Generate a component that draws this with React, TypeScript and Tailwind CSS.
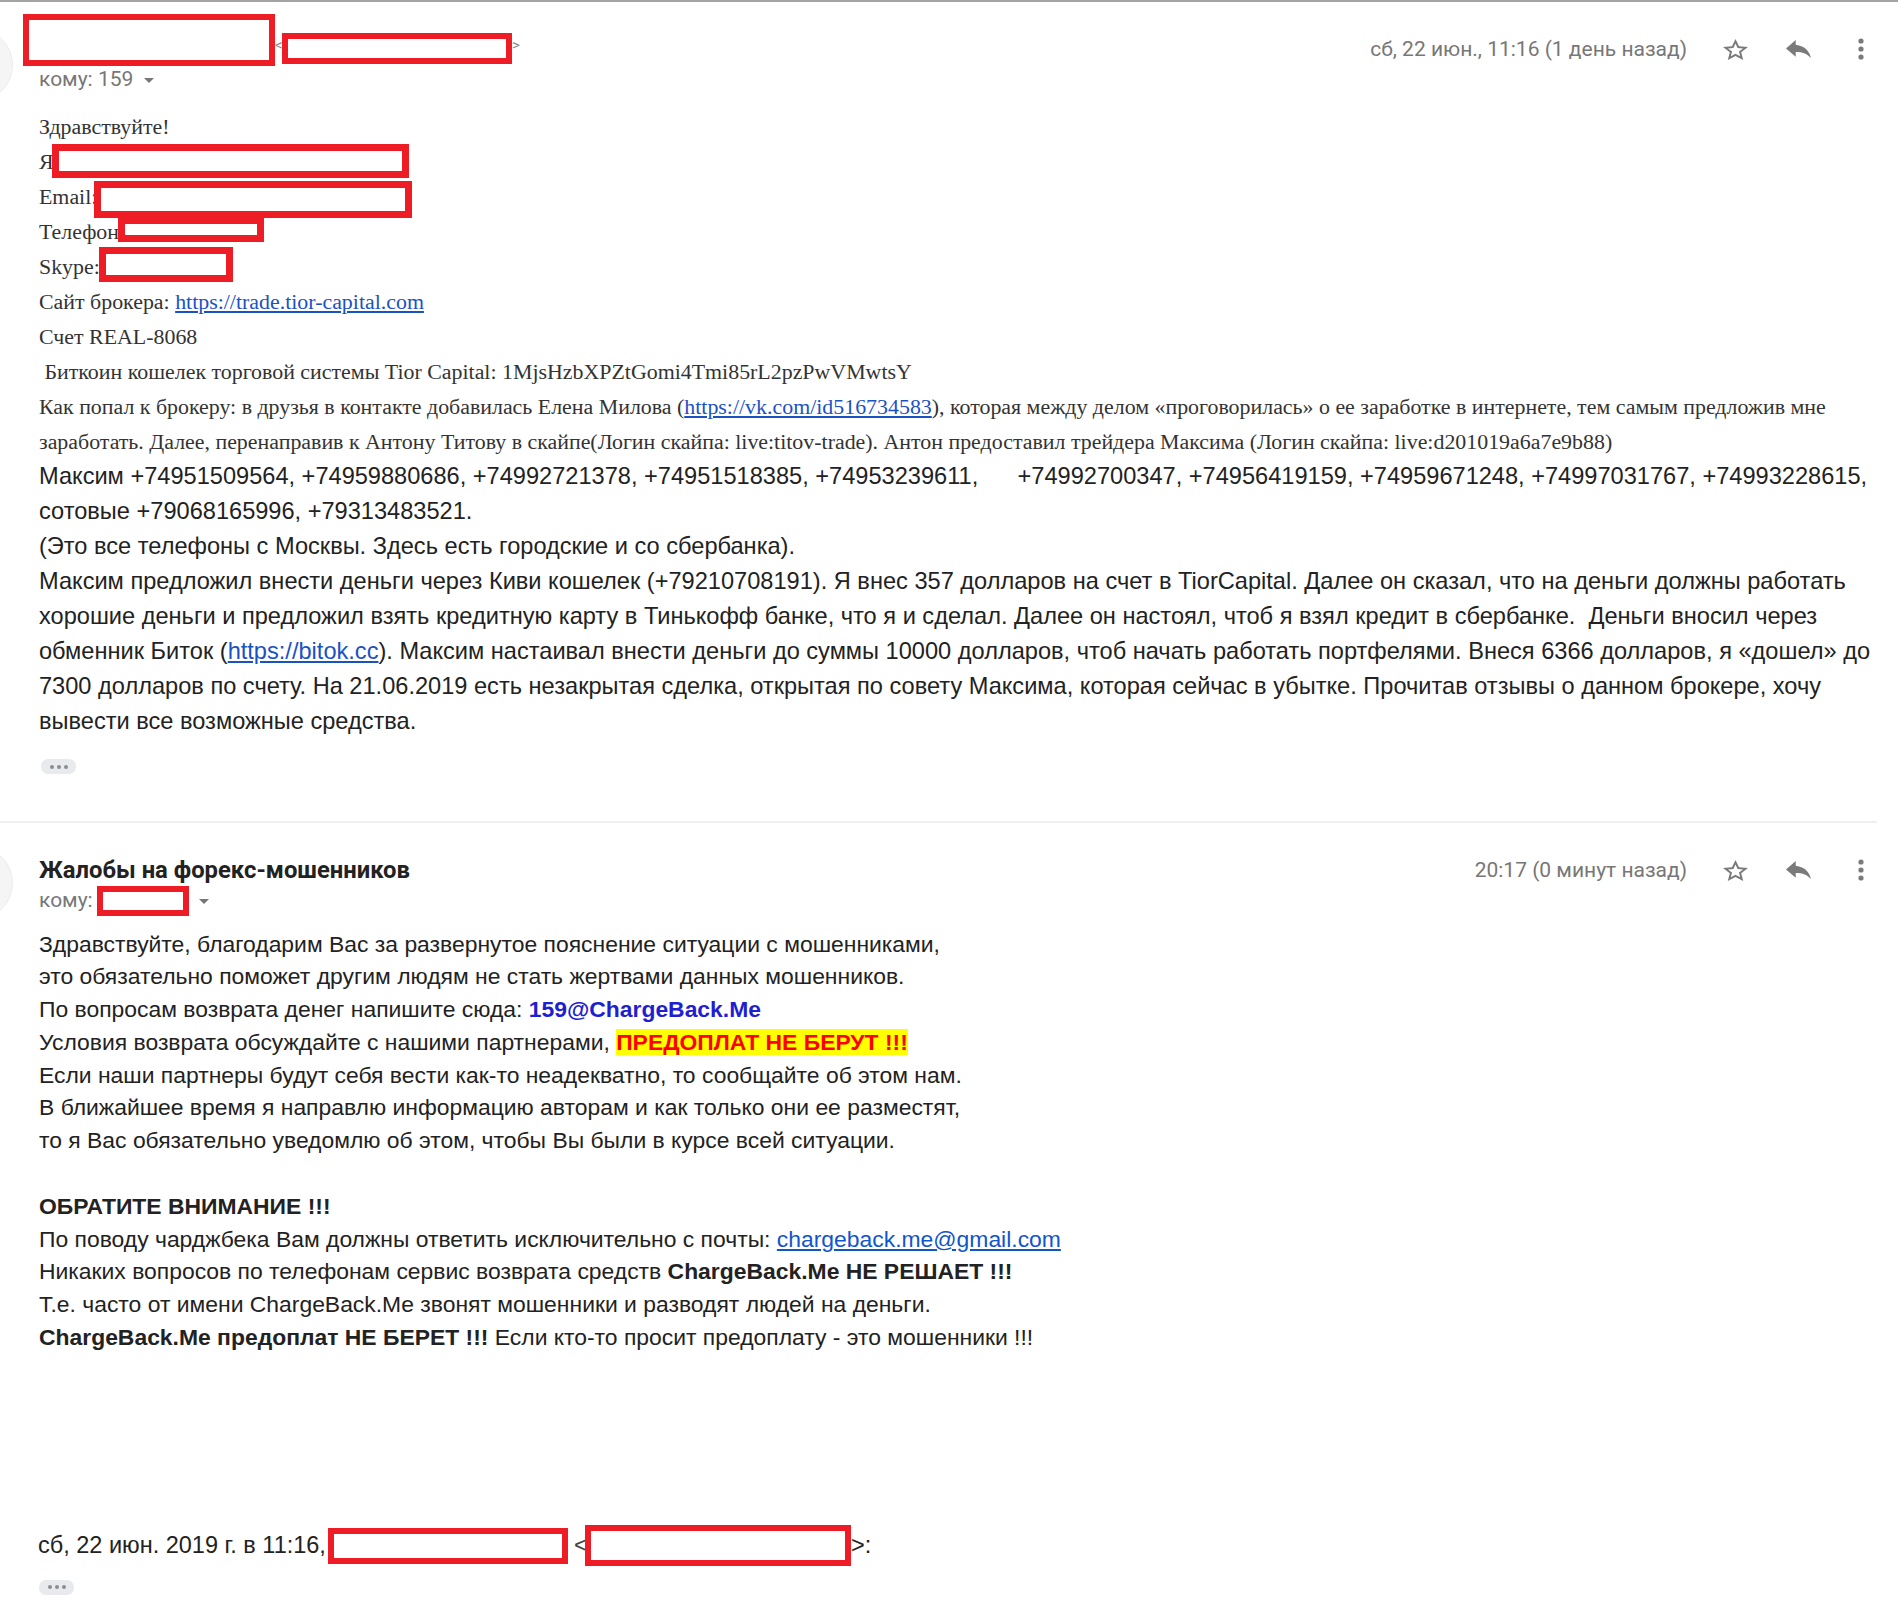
import React from "react";

function RedBox({ className }: { className: string }) {
  return <div className={"shrink-0 bg-white border-[#ee1c25] " + className} />;
}

function Caret() {
  return (
    <span className="inline-block w-0 h-0 border-l-[5px] border-r-[5px] border-t-[5px] border-l-transparent border-r-transparent border-t-[#777]" />
  );
}

function StarIcon() {
  return (
    <svg width="25" height="21" viewBox="2 2 20 19" preserveAspectRatio="none" fill="#7a7a7a">
      <path d="M22 9.24l-7.19-.62L12 2 9.19 8.63 2 9.24l5.46 4.73L5.82 21 12 17.27 18.18 21l-1.63-7.03L22 9.24zM12 15.4l-3.76 2.27 1-4.28-3.32-2.88 4.38-.38L12 6.1l1.71 4.04 4.38.38-3.32 2.88 1 4.28L12 15.4z" />
    </svg>
  );
}

function ReplyIcon() {
  return (
    <svg width="25" height="18" viewBox="3 5 18 15" preserveAspectRatio="none" fill="#7a7a7a">
      <path d="M10 9V5l-7 7 7 7v-4.1c5 0 8.5 1.6 11 5.1-1-5-4-10-11-11z" />
    </svg>
  );
}

function MoreIcon() {
  return (
    <svg width="6" height="22" viewBox="0 0 6 22" fill="#7a7a7a">
      <circle cx="3" cy="3" r="2.6" />
      <circle cx="3" cy="11" r="2.6" />
      <circle cx="3" cy="19" r="2.6" />
    </svg>
  );
}

function Actions({ time }: { time: string }) {
  return (
    <div className="flex items-center h-[24px]">
      <span className="font-['Roboto',sans-serif] text-[21px] text-[#777] leading-[24px] whitespace-nowrap">{time}</span>
      <span className="ml-[36px] flex"><StarIcon /></span>
      <span className="ml-[38px] flex"><ReplyIcon /></span>
      <span className="ml-[47px] flex"><MoreIcon /></span>
    </div>
  );
}

function DotsButton() {
  return (
    <div className="w-[35px] h-[15px] rounded-[7px] bg-[#e8eaed] flex items-center justify-center gap-[3px]">
      <span className="w-[4px] h-[4px] rounded-full bg-[#8a8d91]" />
      <span className="w-[4px] h-[4px] rounded-full bg-[#8a8d91]" />
      <span className="w-[4px] h-[4px] rounded-full bg-[#8a8d91]" />
    </div>
  );
}

const SL = "h-[35px] leading-[35px] whitespace-pre";
const AL = "h-[35px] leading-[35px] whitespace-pre";
const BL = "h-[32.8px] leading-[32.8px] whitespace-pre";
const LINK = "text-[#1a52c4] underline";

export default function App() {
  return (
    <div className="min-h-[1624px] bg-white border-t-2 border-[#a3a3a3] overflow-hidden">
      {/* Message 1 */}
      <div className="relative pl-[39px]">
        <div className="absolute left-[-61px] top-[26px] w-[74px] h-[74px] rounded-full bg-[#f5f5f5] border border-[#ececec]" />
        <div className="flex items-start justify-between pr-[34px] pt-[12px]">
          <div className="flex items-start">
            <RedBox className="-ml-[16px] w-[252px] h-[52px] border-[6px]" />
            <span className="inline-block w-[7px] mt-[24px] text-[15px] leading-[15px] text-[#888] font-['Roboto',sans-serif]">&lt;</span>
            <RedBox className="mt-[19px] w-[230px] h-[31px] border-[6px]" />
            <span className="inline-block mt-[24px] text-[15px] leading-[15px] text-[#888] font-['Roboto',sans-serif]">&gt;</span>
          </div>
          <div className="mt-[23px]">
            <Actions time="сб, 22 июн., 11:16 (1 день назад)" />
          </div>
        </div>
        <div className="flex items-center h-[28px] font-['Roboto',sans-serif] text-[21px] text-[#777]">
          <span>кому: 159</span>
          <span className="ml-[11px] flex"><Caret /></span>
        </div>

        <div className="mt-[14.5px] font-['Liberation_Serif',serif] text-[21.9px] text-[#333]">
          <div className={SL}>Здравствуйте!</div>
          <div className="flex items-center h-[35px]">
            <span className="leading-[35px]">Я</span>
            <RedBox className="-ml-[2px] w-[357px] h-[34px] border-[7px]" />
          </div>
          <div className="flex items-center h-[35px]">
            <span className="leading-[35px]">Email:</span>
            <RedBox className="-ml-[3px] mt-[7px] w-[318px] h-[37px] border-[7px]" />
          </div>
          <div className="flex items-center h-[35px]">
            <span className="leading-[35px]">Телефон</span>
            <RedBox className="-ml-[1px] mb-[3px] w-[146px] h-[25px] border-[7px]" />
          </div>
          <div className="flex items-center h-[35px]">
            <span className="leading-[35px]">Skype:</span>
            <RedBox className="-ml-[1px] mb-[3px] w-[134px] h-[35px] border-[7px]" />
          </div>
          <div className={SL}>
            Сайт брокера: <span className={LINK}>https://trade.tior-capital.com</span>
          </div>
          <div className={SL}>Счет REAL-8068</div>
          <div className={SL}> Биткоин кошелек торговой системы Tior Capital: 1MjsHzbXPZtGomi4Tmi85rL2pzPwVMwtsY</div>
          <div className={SL}>
            Как попал к брокеру: в друзья в контакте добавилась Елена Милова (<span className={LINK}>https://vk.com/id516734583</span>), которая между делом «проговорилась» о ее заработке в интернете, тем самым предложив мне
          </div>
          <div className={SL}>
            заработать. Далее, перенаправив к Антону Титову в скайпе(Логин скайпа: live:titov-trade). Антон предоставил трейдера Максима (Логин скайпа: live:d201019a6a7e9b88)
          </div>
        </div>

        <div className="font-['Liberation_Sans',Arial,sans-serif] text-[23.6px] text-[#222]">
          <div className={AL}>Максим +74951509564, +74959880686, +74992721378, +74951518385, +74953239611,      +74992700347, +74956419159, +74959671248, +74997031767, +74993228615,</div>
          <div className={AL}>сотовые +79068165996, +79313483521.</div>
          <div className={AL}>(Это все телефоны с Москвы. Здесь есть городские и со сбербанка).</div>
          <div className={AL}>Максим предложил внести деньги через Киви кошелек (+79210708191). Я внес 357 долларов на счет в TiorCapital. Далее он сказал, что на деньги должны работать</div>
          <div className={AL}>хорошие деньги и предложил взять кредитную карту в Тинькофф банке, что я и сделал. Далее он настоял, чтоб я взял кредит в сбербанке.  Деньги вносил через</div>
          <div className={AL}>
            обменник Биток (<span className={LINK}>https://bitok.cc</span>). Максим настаивал внести деньги до суммы 10000 долларов, чтоб начать работать портфелями. Внеся 6366 долларов, я «дошел» до
          </div>
          <div className={AL}>7300 долларов по счету. На 21.06.2019 есть незакрытая сделка, открытая по совету Максима, которая сейчас в убытке. Прочитав отзывы о данном брокере, хочу</div>
          <div className={AL}>вывести все возможные средства.</div>
        </div>

        <div className="mt-[20.5px] ml-[2px]">
          <DotsButton />
        </div>
      </div>

      {/* Divider */}
      <div className="mt-[47px] w-[1877px] h-[2px] bg-[#efefef]" />

      {/* Message 2 */}
      <div className="relative pl-[39px]">
        <div className="absolute left-[-61px] top-[23px] w-[74px] h-[74px] rounded-full bg-[#f5f5f5] border border-[#ececec]" />
        <div className="flex items-start justify-between pr-[34px] pt-[32px]">
          <div>
            <div className="h-[30px] leading-[30px] font-['Roboto',sans-serif] font-bold text-[23.8px] text-[#222]">Жалобы на форекс-мошенников</div>
            <div className="flex items-center h-[32px] font-['Roboto',sans-serif] text-[21px] text-[#777]">
              <span>кому:</span>
              <RedBox className="ml-[4px] w-[92px] h-[30px] border-[6px]" />
              <span className="ml-[10px] flex"><Caret /></span>
            </div>
          </div>
          <div className="mt-[3px]">
            <Actions time="20:17 (0 минут назад)" />
          </div>
        </div>

        <div className="mt-[10.5px] font-['Liberation_Sans',Arial,sans-serif] text-[22.9px] text-[#222]">
          <div className={BL}>Здравствуйте, благодарим Вас за развернутое пояснение ситуации с мошенниками,</div>
          <div className={BL}>это обязательно поможет другим людям не стать жертвами данных мошенников.</div>
          <div className={BL}>
            По вопросам возврата денег напишите сюда: <span className="font-bold text-[#1f1fd1]">159@ChargeBack.Me</span>
          </div>
          <div className={BL}>
            Условия возврата обсуждайте с нашими партнерами, <span className="font-bold text-[#ff0000] bg-[#ffff00]">ПРЕДОПЛАТ НЕ БЕРУТ !!!</span>
          </div>
          <div className={BL}>Если наши партнеры будут себя вести как-то неадекватно, то сообщайте об этом нам.</div>
          <div className={BL}>В ближайшее время я направлю информацию авторам и как только они ее разместят,</div>
          <div className={BL}>то я Вас обязательно уведомлю об этом, чтобы Вы были в курсе всей ситуации.</div>
          <div className={BL}> </div>
          <div className={BL + " font-bold"}>ОБРАТИТЕ ВНИМАНИЕ !!!</div>
          <div className={BL}>
            По поводу чарджбека Вам должны ответить исключительно с почты: <span className="text-[#1155cc] underline">chargeback.me@gmail.com</span>
          </div>
          <div className={BL}>
            Никаких вопросов по телефонам сервис возврата средств <span className="font-bold">ChargeBack.Me НЕ РЕШАЕТ !!!</span>
          </div>
          <div className={BL}>Т.е. часто от имени ChargeBack.Me звонят мошенники и разводят людей на деньги.</div>
          <div className={BL}>
            <span className="font-bold">ChargeBack.Me предоплат НЕ БЕРЕТ !!!</span> Если кто-то просит предоплату - это мошенники !!!
          </div>
        </div>

        <div className="mt-[172px] flex items-center h-[40px] font-['Liberation_Sans',Arial,sans-serif] text-[23.5px] text-[#222]">
          <span className="-ml-[1px]">сб, 22 июн. 2019 г. в 11:16,</span>
          <RedBox className="ml-[2px] w-[240px] h-[36px] border-[6px]" />
          <span className="ml-[6px] w-[11px] text-[#444]">&lt;</span>
          <RedBox className="w-[266px] h-[41px] border-[6px]" />
          <span>&gt;:</span>
        </div>

        <div className="mt-[14px] ml-[0px] pb-[20px]">
          <DotsButton />
        </div>
      </div>
    </div>
  );
}
